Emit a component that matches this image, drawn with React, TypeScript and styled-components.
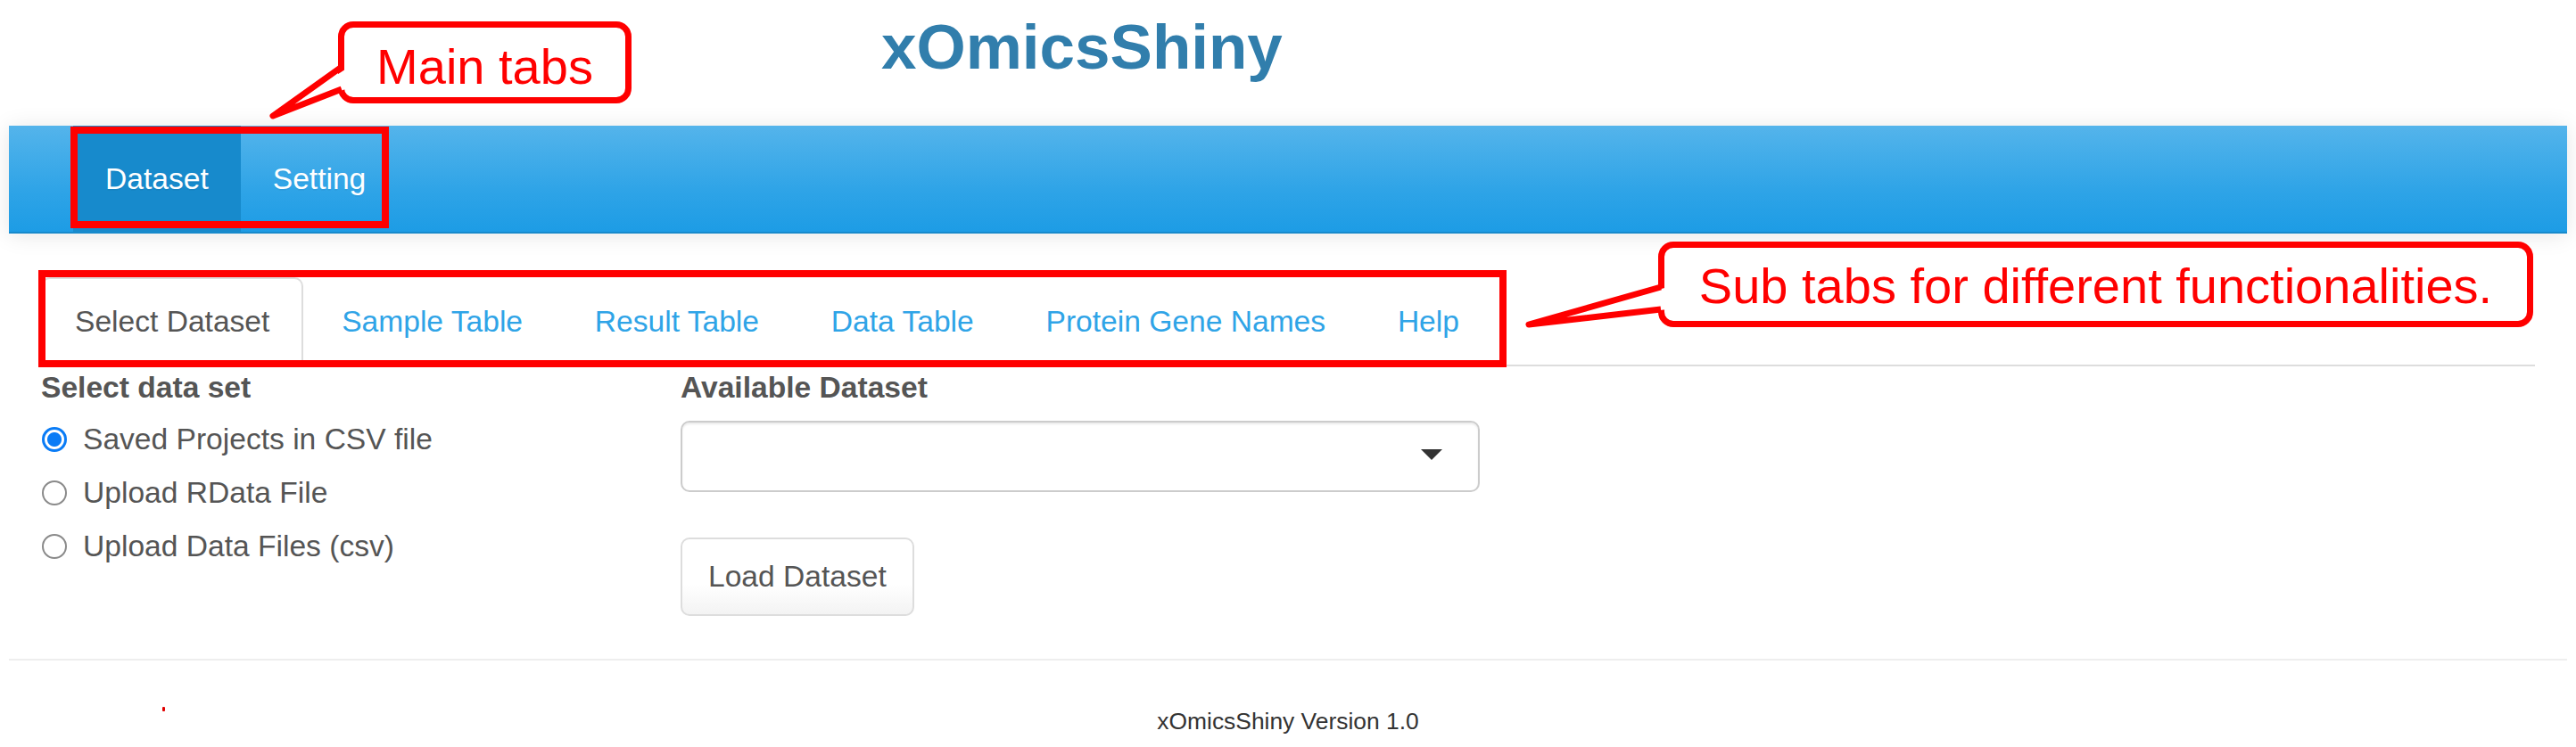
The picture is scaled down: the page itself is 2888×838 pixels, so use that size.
import React from "react";
import styled, { createGlobalStyle } from "styled-components";

const GlobalStyle = createGlobalStyle`
  html, body { margin: 0; padding: 0; background: #fff; }
  body {
    font-family: "Liberation Sans", Arial, "Helvetica Neue", sans-serif;
    color: #555;
    width: 2888px;
    height: 838px;
    overflow: hidden;
  }
  * { box-sizing: border-box; }
`;

const Page = styled.div`
  position: relative;
  width: 2888px;
  height: 838px;
  padding: 0 10px;
`;

const Header = styled.header`
  height: 141px;
  padding: 17px 0 0 978px;
`;

const Title = styled.h1`
  margin: 0;
  font-size: 71px;
  line-height: 71px;
  font-weight: 700;
  color: #317eac;
`;

const Navbar = styled.nav`
  height: 121px;
  display: flex;
  padding-left: 72px;
  background-image: linear-gradient(#54b4eb, #2fa4e7 60%, #1d9ce5);
  border-bottom: 2px solid #178acc;
  box-shadow: 0 2px 24px rgba(0, 0, 0, 0.1);
`;

const NavTab = styled.div<{ $active?: boolean }>`
  display: flex;
  align-items: center;
  padding: 0 36px;
  font-size: 33.6px;
  color: #fff;
  text-shadow: 0 2px 0 rgba(0, 0, 0, 0.05);
  background: ${(p) => (p.$active ? "#178acc" : "transparent")};
`;

const Main = styled.main`
  padding: 49px 36px 0;
`;

const Tabs = styled.ul`
  display: flex;
  margin: 0;
  padding: 0;
  list-style: none;
  border-bottom: 2px solid #ddd;
`;

const Tab = styled.li<{ $active?: boolean }>`
  margin: 0 4.8px -2px 0;
  padding: 24px 36px;
  font-size: 33.6px;
  line-height: 48px;
  border: 2px solid ${(p) => (p.$active ? "#ddd" : "transparent")};
  border-bottom-color: ${(p) => (p.$active ? "#fff" : "transparent")};
  border-radius: 10px 10px 0 0;
  background: ${(p) => (p.$active ? "#fff" : "transparent")};
  color: ${(p) => (p.$active ? "#555" : "#2fa4e7")};
`;

const Row = styled.div`
  display: flex;
`;

const Column = styled.div<{ $width: number }>`
  width: ${(p) => p.$width}px;
  display: flex;
  flex-direction: column;
  align-items: flex-start;
`;

const FieldLabel = styled.div<{ $gap: number }>`
  font-size: 33.6px;
  line-height: 48px;
  font-weight: 700;
  color: #555;
  margin-bottom: ${(p) => p.$gap}px;
`;

const RadioGroup = styled.div`
  display: flex;
  flex-direction: column;
  gap: 12px;
`;

const RadioRow = styled.label`
  display: flex;
  align-items: center;
  gap: 18px;
  height: 48px;
  padding-left: 1px;
  font-size: 33.6px;
  color: #555;
`;

const RadioCircle = styled.span<{ $checked?: boolean }>`
  flex: none;
  width: 28px;
  height: 28px;
  border-radius: 50%;
  border: ${(p) => (p.$checked ? "3px solid #0a7cf6" : "2px solid #8a8a8a")};
  background: ${(p) =>
    p.$checked
      ? "radial-gradient(circle, #0a7cf6 0 7.5px, #fff 8.5px)"
      : "#fff"};
`;

const SelectBox = styled.div`
  width: 896px;
  height: 80px;
  display: flex;
  align-items: center;
  justify-content: flex-end;
  padding-right: 40px;
  border: 2px solid #ccc;
  border-radius: 10px;
  background: #fff;
  box-shadow: inset 0 2px 2px rgba(0, 0, 0, 0.075);
`;

const Caret = styled.span`
  width: 0;
  height: 0;
  margin-top: -4px;
  border-top: 12px solid #333;
  border-left: 12px solid transparent;
  border-right: 12px solid transparent;
`;

const Button = styled.button`
  margin-top: 51px;
  height: 88px;
  padding: 0 29px;
  font-family: inherit;
  font-size: 33.6px;
  line-height: 48px;
  color: #555;
  border: 2px solid #ddd;
  border-radius: 10px;
  background-image: linear-gradient(#fff, #fff 60%, #f3f3f3);
`;

const Footer = styled.footer`
  margin-top: 48px;
  padding-top: 48px;
  border-top: 2px solid #eee;
  text-align: center;
  font-size: 26.4px;
  line-height: 40px;
  color: #333;
`;

/* ---------- annotation overlays ---------- */

const Frame = styled.div<{ $x: number; $y: number; $w: number; $h: number }>`
  position: absolute;
  left: ${(p) => p.$x}px;
  top: ${(p) => p.$y}px;
  width: ${(p) => p.$w}px;
  height: ${(p) => p.$h}px;
  border: 8px solid #ff0000;
  pointer-events: none;
`;

const Bubble = styled.div<{
  $x: number;
  $y: number;
  $w: number;
  $h: number;
  $shift: number;
}>`
  position: absolute;
  left: ${(p) => p.$x}px;
  top: ${(p) => p.$y}px;
  width: ${(p) => p.$w}px;
  height: ${(p) => p.$h}px;
  display: flex;
  align-items: center;
  justify-content: center;
  padding-top: ${(p) => p.$shift}px;
  border: 7px solid #ff0000;
  border-radius: 17px;
  background: #fff;
  color: #ff0000;
  font-size: 56px;
  line-height: 56px;
  white-space: nowrap;
`;

const Tails = styled.svg`
  position: absolute;
  left: 0;
  top: 0;
  width: 2888px;
  height: 838px;
  pointer-events: none;
`;

const Speck = styled.span`
  position: absolute;
  left: 182px;
  top: 793px;
  width: 3px;
  height: 5px;
  border-radius: 1px;
  background: #e00000;
`;

const subTabs = [
  "Select Dataset",
  "Sample Table",
  "Result Table",
  "Data Table",
  "Protein Gene Names",
  "Help",
];

const radios = [
  { label: "Saved Projects in CSV file", checked: true },
  { label: "Upload RData File", checked: false },
  { label: "Upload Data Files (csv)", checked: false },
];

export default function App() {
  return (
    <>
      <GlobalStyle />
      <Page>
        <Header>
          <Title>xOmicsShiny</Title>
        </Header>
        <Navbar>
          <NavTab $active>Dataset</NavTab>
          <NavTab>Setting</NavTab>
        </Navbar>
        <Main>
          <Tabs>
            {subTabs.map((t, i) => (
              <Tab key={t} $active={i === 0}>
                {t}
              </Tab>
            ))}
          </Tabs>
          <Row>
            <Column $width={717}>
              <FieldLabel $gap={10}>Select data set</FieldLabel>
              <RadioGroup>
                {radios.map((r) => (
                  <RadioRow key={r.label}>
                    <RadioCircle $checked={r.checked} />
                    {r.label}
                  </RadioRow>
                ))}
              </RadioGroup>
            </Column>
            <Column $width={896}>
              <FieldLabel $gap={13}>Available Dataset</FieldLabel>
              <SelectBox>
                <Caret />
              </SelectBox>
              <Button>Load Dataset</Button>
            </Column>
          </Row>
        </Main>
        <Footer>xOmicsShiny Version 1.0</Footer>

        <Frame $x={79} $y={142} $w={357} $h={114} />
        <Frame $x={43} $y={303} $w={1646} $h={109} />
        <Bubble $x={379} $y={24} $w={329} $h={92} $shift={9}>
          Main tabs
        </Bubble>
        <Bubble $x={1859} $y={271} $w={981} $h={96} $shift={3}>
          Sub tabs for different functionalities.
        </Bubble>
        <Tails viewBox="0 0 2888 838">
          <polygon points="390,76 306,130 390,99" fill="#fff" />
          <polyline
            points="383,75 306,130 383,100"
            fill="none"
            stroke="#ff0000"
            strokeWidth="7"
            strokeLinejoin="round"
          />
          <polygon points="1870,322 1714,364 1870,347" fill="#fff" />
          <polyline
            points="1862,322 1714,364 1862,347"
            fill="none"
            stroke="#ff0000"
            strokeWidth="7"
            strokeLinejoin="round"
          />
        </Tails>
        <Speck />
      </Page>
    </>
  );
}
